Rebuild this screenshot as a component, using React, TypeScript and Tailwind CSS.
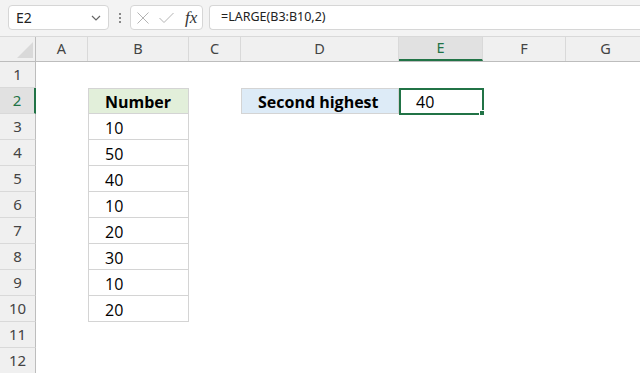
import React from "react";

const COLS = [
  { k: "A", w: 52 },
  { k: "B", w: 101 },
  { k: "C", w: 52 },
  { k: "D", w: 158 },
  { k: "E", w: 84 },
  { k: "F", w: 83 },
  { k: "G", w: 80 },
];

const nums = ["10", "50", "40", "10", "20", "30", "10", "20"];

const cellFont = { fontFamily: "'Open Sans', Lato, sans-serif" } as React.CSSProperties;

function Cell({ r, c }: { r: number; c: string }) {
  const w = COLS.find((x) => x.k === c)!.w;
  let cls = "h-full shrink-0 flex items-center pt-[2px] text-[16px] text-black ";
  let content: React.ReactNode = null;
  if (c === "B" && r >= 2 && r <= 10) {
    cls += "border-r border-b border-l border-[#d4d4d4] pl-[16px] ";
    if (r === 2) {
      cls += "border-t bg-[#e2efda] font-bold ";
      content = "Number";
    } else content = nums[r - 3];
  }
  if (c === "D" && r === 2) {
    cls += "border border-[#d4d4d4] bg-[#ddebf7] font-bold pl-[16px] ";
    content = "Second highest";
  }
  if (c === "E" && r === 2) {
    cls += "relative pl-[17px] ";
    content = (
      <>
        <span>40</span>
        <div className="absolute left-0 top-0 w-[85px] h-[27px] border-2 border-[#217346]" />
        <div className="absolute left-[80px] top-[22px] w-[6px] h-[6px] bg-[#217346] border border-white" />
      </>
    );
  }
  return (
    <div className={cls} style={{ width: w, ...cellFont }}>
      {content}
    </div>
  );
}

export default function App() {
  const hdrFont = { fontFamily: "'Noto Sans', 'Open Sans', sans-serif" } as React.CSSProperties;
  return (
    <div className="w-[640px] h-[373px] overflow-hidden bg-white" style={hdrFont}>
      {/* formula bar */}
      <div className="h-[37px] bg-[#f3f3f3] flex items-start pt-[5px] pl-[8px] border-b border-[#d9d9d9]">
        <div className="w-[101px] h-[25px] bg-white border border-[#d6d6d6] rounded-[4px] flex items-center justify-between pl-[7px] pr-[6px]">
          <span className="text-[14px] text-[#222]">E2</span>
          <svg width="12" height="12" viewBox="0 0 12 12">
            <path d="M2 4 L6 8 L10 4" fill="none" stroke="#666" strokeWidth="1.2" />
          </svg>
        </div>
        <div className="w-[21px] h-[25px] flex flex-col items-center justify-center gap-[2px]">
          <div className="w-[2px] h-[2px] bg-[#888]" />
          <div className="w-[2px] h-[2px] bg-[#888]" />
          <div className="w-[2px] h-[2px] bg-[#888]" />
        </div>
        <div className="w-[73px] h-[25px] bg-white border border-[#d6d6d6] rounded-[4px] flex items-center pl-[5px] gap-[8px]">
          <svg width="14" height="14" viewBox="0 0 14 14">
            <path d="M1.5 1.5 L12.5 12.5 M12.5 1.5 L1.5 12.5" stroke="#b4b4b4" strokeWidth="1" fill="none" />
          </svg>
          <svg width="17" height="14" viewBox="0 0 17 14">
            <path d="M1.5 7 L6 11.5 L15.5 2" stroke="#b4b4b4" strokeWidth="1" fill="none" />
          </svg>
          <span
            className="text-[17px] italic text-[#333] ml-[2px] leading-none"
            style={{ fontFamily: "'Liberation Serif', 'DejaVu Serif', serif" }}
          >
            fx
          </span>
        </div>
        <div className="ml-[6px] flex-1 h-[25px] bg-white border border-[#d6d6d6] border-r-0 rounded-l-[4px] flex items-center pl-[11px]">
          <span className="text-[12.5px] text-[#222]">=LARGE(B3:B10,2)</span>
        </div>
      </div>
      {/* column headers */}
      <div className="h-[25px] flex bg-[#f0f0f0] border-b border-[#bdbdbd]">
        <div className="w-[36px] shrink-0 h-full border-r border-[#bdbdbd] relative">
          <svg className="absolute left-[17px] top-[5px]" width="16" height="16" viewBox="0 0 16 16">
            <path d="M16 0 L16 16 L0 16 Z" fill="#d9d9d9" />
          </svg>
        </div>
        {COLS.map((c) => (
          <div
            key={c.k}
            className={
              "shrink-0 h-full flex items-center justify-center text-[14.5px] border-r border-[#d9d9d9] " +
              (c.k === "E"
                ? "bg-[#e1e1e1] text-[#217346] border-b-2 border-b-[#217346]"
                : "text-[#444]")
            }
            style={{ width: c.w }}
          >
            {c.k}
          </div>
        ))}
      </div>
      {/* rows */}
      {Array.from({ length: 12 }, (_, i) => i + 1).map((r) => (
        <div key={r} className="h-[26px] flex">
          <div
            className={
              "w-[36px] shrink-0 h-full flex items-center justify-center text-[15px] border-b border-[#d9d9d9] " +
              (r === 2
                ? "bg-[#e1e1e1] text-[#217346] border-r-2 border-r-[#217346]"
                : "bg-[#f0f0f0] text-[#444] border-r border-r-[#bdbdbd]")
            }
          >
            {r}
          </div>
          {COLS.map((c) => (
            <Cell key={c.k} r={r} c={c.k} />
          ))}
        </div>
      ))}
    </div>
  );
}
